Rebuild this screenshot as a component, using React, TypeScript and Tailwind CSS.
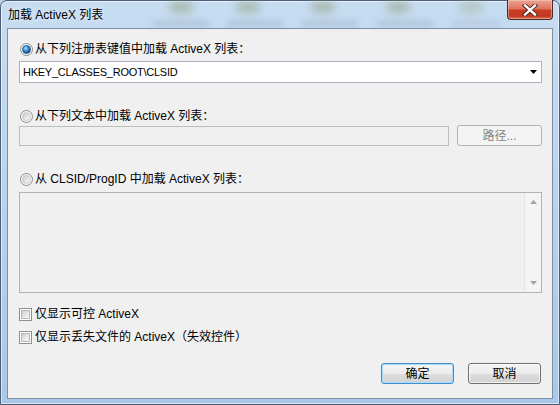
import React from "react";

const FONT = "font-['Liberation_Sans','Noto_Sans_CJK_SC',sans-serif]";

function Radio({ checked }: { checked?: boolean }) {
  return (
    <svg width="13" height="13" viewBox="0 0 13 13" className="shrink-0">
      <defs>
        <linearGradient id="radioRing" x1="0" y1="0" x2="1" y2="1">
          <stop offset="0" stopColor="#c9c9c9" />
          <stop offset="1" stopColor="#fbfbfb" />
        </linearGradient>
        <radialGradient id="radioDot" cx="0.4" cy="0.35" r="0.7">
          <stop offset="0" stopColor="#b9e4fb" />
          <stop offset="0.45" stopColor="#3a8fd6" />
          <stop offset="1" stopColor="#0d3d7a" />
        </radialGradient>
      </defs>
      <circle cx="6.5" cy="6.5" r="6" fill="#f6f6f6" stroke="#8b8d8f" />
      <circle
        cx="6.5"
        cy="6.5"
        r="4"
        fill={checked ? "url(#radioDot)" : "url(#radioRing)"}
        stroke={checked ? "#27507f" : "#c2c4c6"}
        strokeWidth="0.8"
      />
    </svg>
  );
}

function Checkbox() {
  return (
    <div className="h-[13px] w-[13px] shrink-0 border border-[#8e8f8f] bg-white p-[1px]">
      <div className="h-full w-full border border-[#b5b8bb] bg-[linear-gradient(135deg,#cbcdd0_0%,#e8e9ea_55%,#f8f8f8_100%)]" />
    </div>
  );
}

export default function App() {
  return (
    <div className={`h-[405px] w-[560px] overflow-hidden bg-[#b9d2ec] text-black ${FONT}`}>
      <div className="relative flex h-full w-full flex-col rounded-t-[7px] border border-[#4e6079] bg-[linear-gradient(to_bottom,#c6dcf1_0%,#bcd5ee_40%,#a9c7e7_100%)] px-[6px] pb-[5px] shadow-[inset_0_0_0_1px_rgba(255,255,255,0.55)]">
        {/* blurred desktop behind the glass */}
        <div className="pointer-events-none absolute left-[168px] top-[0px] h-[12px] w-[24px] rounded-full bg-[#8a9568] opacity-45 blur-[4px]" />
        <div className="pointer-events-none absolute left-[235px] top-[0px] h-[12px] w-[24px] rounded-full bg-[#8a9568] opacity-45 blur-[4px]" />
        <div className="pointer-events-none absolute left-[310px] top-[0px] h-[12px] w-[24px] rounded-full bg-[#8a9568] opacity-45 blur-[4px]" />
        <div className="pointer-events-none absolute left-[385px] top-[0px] h-[12px] w-[24px] rounded-full bg-[#8a9568] opacity-45 blur-[4px]" />
        <div className="pointer-events-none absolute left-[458px] top-[0px] h-[12px] w-[24px] rounded-full bg-[#a0a880] opacity-40 blur-[4px]" />
        <div className="pointer-events-none absolute left-[152px] top-[20px] h-[5px] w-[56px] bg-[#7f8fa2] opacity-35 blur-[3px]" />
        <div className="pointer-events-none absolute left-[226px] top-[20px] h-[5px] w-[56px] bg-[#7f8fa2] opacity-35 blur-[3px]" />
        <div className="pointer-events-none absolute left-[301px] top-[20px] h-[5px] w-[56px] bg-[#7f8fa2] opacity-35 blur-[3px]" />
        <div className="pointer-events-none absolute left-[376px] top-[20px] h-[5px] w-[56px] bg-[#7f8fa2] opacity-35 blur-[3px]" />
        <div className="pointer-events-none absolute left-[450px] top-[20px] h-[5px] w-[50px] bg-[#8f9db0] opacity-30 blur-[3px]" />

        {/* title bar */}
        <div className="relative flex h-[27px] shrink-0 items-center pl-[1px]">
          <span className="text-[12px] leading-[14px] [text-shadow:0_0_6px_rgba(255,255,255,0.9)]">
            加载 ActiveX 列表
          </span>
          <div className="absolute right-[0px] top-[-1px] flex h-[20px] w-[46px] items-center justify-center rounded-b-[4px] border border-t-0 border-[#4c2a27] bg-[linear-gradient(to_bottom,#eba395_0%,#df7560_45%,#c93c22_55%,#c23a22_85%,#d86e55_100%)] shadow-[inset_0_0_0_1px_rgba(255,220,210,0.45)]">
            <svg width="16" height="12" viewBox="0 0 16 12">
              <path d="M3 1.5 L13 10.5 M13 1.5 L3 10.5" stroke="#4a1e18" strokeWidth="4.2" strokeLinecap="square" />
              <path d="M3 1.5 L13 10.5 M13 1.5 L3 10.5" stroke="#ffffff" strokeWidth="2.4" strokeLinecap="square" />
            </svg>
          </div>
        </div>

        {/* client area */}
        <div className="flex flex-1 flex-col border border-[#7d8fa5] bg-[#f0f0f0] pl-[11px] pr-[10px] pt-[13px] text-[12px] leading-[14px]">
          <div className="flex h-[14px] items-center gap-[2px] pl-[1px]">
            <Radio checked />
            <span>从下列注册表键值中加载 ActiveX 列表：</span>
          </div>

          <div className="mt-[5px] flex h-[22px] items-center justify-between border border-[#a9b5c3] bg-white pl-[3px] pr-[4px]">
            <span className="font-['Liberation_Sans',sans-serif] text-[11px] tracking-[-0.25px]">
              {"HKEY_CLASSES_ROOT\\CLSID"}
            </span>
            <svg width="7" height="4" viewBox="0 0 7 4">
              <polygon points="0,0 7,0 3.5,4" fill="#000" />
            </svg>
          </div>

          <div className="mt-[26px] flex h-[14px] items-center gap-[2px] pl-[1px]">
            <Radio />
            <span>从下列文本中加载 ActiveX 列表：</span>
          </div>

          <div className="mt-[2px] flex h-[21px] items-end gap-[8px]">
            <div className="h-[20px] flex-1 border border-[#bdbdbd] bg-[#f0f0f0]" />
            <div className="flex h-[21px] w-[85px] items-center justify-center rounded-[3px] border border-[#adb2b5] bg-[#f4f4f4] text-[#838383]">
              路径...
            </div>
          </div>

          <div className="mt-[26px] flex h-[14px] items-center gap-[2px] pl-[1px]">
            <Radio />
            <span>从 CLSID/ProgID 中加载 ActiveX 列表：</span>
          </div>

          <div className="mt-[6px] flex h-[101px] justify-end border border-[#b3b3b3] bg-[#f0f0f0]">
            <div className="flex w-[17px] flex-col items-center justify-between border-l border-[#e3e3e3] bg-[#f4f4f4] py-[7px]">
              <svg width="7" height="4" viewBox="0 0 7 4">
                <polygon points="0,4 7,4 3.5,0" fill="#a3a3a3" />
              </svg>
              <svg width="7" height="4" viewBox="0 0 7 4">
                <polygon points="0,0 7,0 3.5,4" fill="#a3a3a3" />
              </svg>
            </div>
          </div>

          <div className="mt-[14px] flex h-[14px] items-center gap-[3px]">
            <Checkbox />
            <span>仅显示可控 ActiveX</span>
          </div>

          <div className="mt-[9px] flex h-[14px] items-center gap-[3px]">
            <Checkbox />
            <span>仅显示丢失文件的 ActiveX（失效控件）</span>
          </div>

          <div className="mt-[19px] flex justify-end gap-[14px] pr-[1px]">
            <button className="flex h-[21px] w-[73px] items-center justify-center rounded-[3px] border border-[#3c8fd0] bg-[linear-gradient(to_bottom,#f4f4f4_0%,#ececec_50%,#dedede_51%,#d2d2d2_100%)] shadow-[inset_0_0_0_1px_#a8dcf8]">
              确定
            </button>
            <button className="flex h-[21px] w-[73px] items-center justify-center rounded-[3px] border border-[#707070] bg-[linear-gradient(to_bottom,#f4f4f4_0%,#ececec_50%,#dedede_51%,#d2d2d2_100%)] shadow-[inset_0_0_0_1px_rgba(255,255,255,0.7)]">
              取消
            </button>
          </div>
        </div>
      </div>
    </div>
  );
}
